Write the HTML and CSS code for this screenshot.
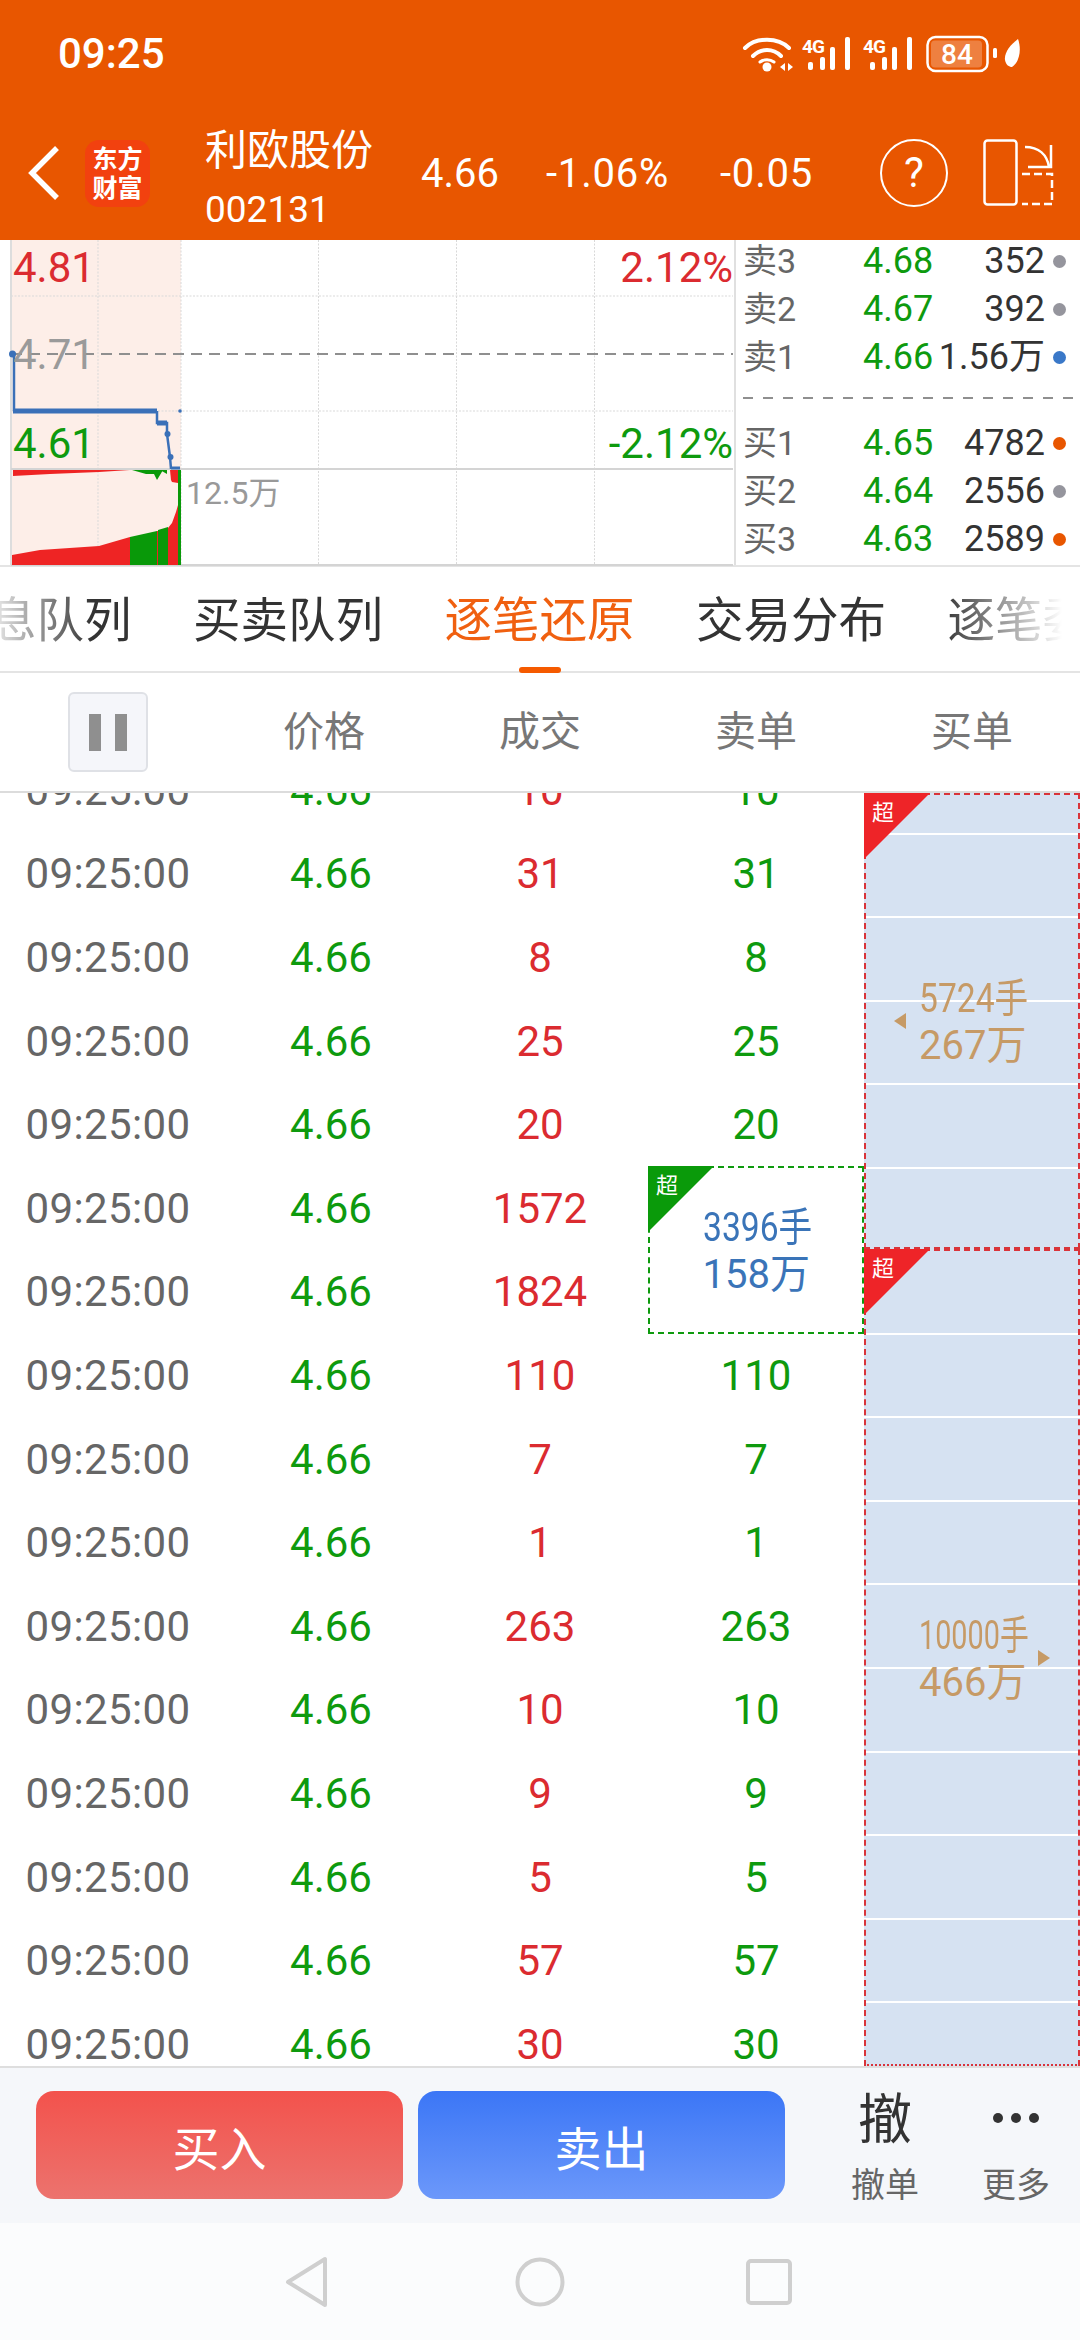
FILE: index.html
```html
<!DOCTYPE html>
<html lang="zh">
<head>
<meta charset="utf-8">
<title>利欧股份</title>
<link rel="stylesheet" href="styles.css">
</head>
<body>
<div class="page">
  <header class="top">
    <div class="status">
      <span class="clock">09:25</span>
      <svg class="status-icons" width="290" height="40" viewBox="0 0 290 40">
        <g fill="none" stroke="#fff" stroke-linecap="round">
          <path d="M3 14 C14 3 36 3 47 14" stroke-width="4"/>
          <path d="M11 22 C19 14 31 14 39 22" stroke-width="4"/>
          <path d="M18 28 C22 25 28 25 32 28" stroke-width="3"/>
        </g>
        <circle cx="25" cy="33" r="4.5" fill="#fff"/>
        <path d="M38 33 l5 -4 v8z M46 29 l5 4 l-5 4z" fill="#fff"/>
        <text class="s4g" x="60" y="19">4G</text>
        <g fill="#fff">
          <rect x="66" y="28" width="5" height="8" rx="2"/><rect x="78" y="23" width="5" height="13" rx="2"/><rect x="88" y="13" width="5" height="23" rx="2"/><rect x="103" y="3" width="5" height="33" rx="2"/>
        </g>
        <text class="s4g" x="121" y="19">4G</text>
        <g fill="#fff">
          <rect x="128" y="28" width="5" height="8" rx="2"/><rect x="140" y="23" width="5" height="13" rx="2"/><rect x="150" y="13" width="5" height="23" rx="2"/><rect x="165" y="3" width="5" height="33" rx="2"/>
        </g>
        <rect x="185.500" y="3" width="60" height="34" rx="8" fill="none" stroke="#fff" stroke-width="2.5"/>
        <rect x="189" y="6.500" width="51" height="27" rx="4" fill="#fff" fill-opacity=".25"/>
        <text class="sbat" x="215" y="30">84</text>
        <rect x="251" y="14" width="4" height="10" rx="1.5" fill="#fff"/>
        <path d="M276 5 C268 11 262 19 263 26 C264 31 267 33 270 33 C277 29 280 16 276 5Z" fill="#fff"/>
      </svg>
    </div>
    <div class="title">
      <svg class="back" width="34" height="56" viewBox="0 0 34 56"><path d="M30 3 L5 28 L30 53" fill="none" stroke="#fff" stroke-width="5.5"/></svg>
      <div class="logo"><span>东方</span><span>财富</span></div>
      <div class="name"><span class="name-cn">利欧股份</span><span class="name-code">002131</span></div>
      <div class="quote">
        <span class="q1">4.66</span>
        <span class="q2">-1.06%</span>
        <span class="q3">-0.05</span>
      </div>
      <div class="help">?</div>
      <svg class="flip" width="72" height="68" viewBox="0 0 72 68">
        <rect x="1.5" y="1.5" width="32" height="64" rx="3" fill="none" stroke="#fff" stroke-width="2.5"/>
        <path d="M42 8 C56 8 64 16 66 28 M68 6 V28 H45" fill="none" stroke="#fff" stroke-width="2.5"/>
        <path d="M39 35 H69 V65 H39" fill="none" stroke="#fff" stroke-width="2.5" stroke-dasharray="8 4"/>
      </svg>
    </div>
  </header>

  <section class="market">
    <div class="chart">
      <svg class="chart-svg" width="735" height="326" viewBox="0 0 735 326">
        <rect x="11" y="0" width="170" height="325" fill="#fdeee8"/>
        <g stroke="#d9d9d9" stroke-width="1" stroke-dasharray="2 1.5" fill="none">
          <path d="M11 56H733M11 171H733"/>
          <path d="M98 0V325M181 0V325M318.500 0V325M456.500 0V325M594.500 0V325"/>
        </g>
        <path d="M11 0V325" stroke="#ddd" stroke-width="2"/>
        <path d="M11 114H733" stroke="#8f8f8f" stroke-width="2" stroke-dasharray="11 7"/>
        <path d="M11 229H733M11 325H733" stroke="#d4d4d4" stroke-width="2"/>
        <g fill="#ee2424">
          <path d="M13 230V236L50 234L99 232L130 230Z"/>
          <path d="M170 230H178V243L172 242L171 240Z"/>
          <path d="M12 325V315L40 310L99 306L130 297V325Z"/>
          <path d="M157 291H158V325H157Z"/>
          <path d="M168 288L172 283L176 272L178 265V325H168Z"/>
        </g>
        <g fill="#099909">
          <path d="M132 230H163L157 240L154 234L146 234Z"/>
          <path d="M160 230H167V234Z"/>
          <path d="M130 297L157 291V325H130Z"/>
          <path d="M158 290L168 287V325H158Z"/>
          <path d="M178 230H181V325H178Z"/>
        </g>
        <g fill="none" stroke="#3a70b8">
          <path d="M14 114V171" stroke-width="2.5"/>
          <path d="M13 171H157" stroke-width="5"/>
          <path d="M157 171V183H167V194L170 217L171 229" stroke-width="2.500"/>
          <path d="M157 183H167" stroke-width="5"/>
          <path d="M171 228H180" stroke-width="3"/>
        </g>
        <g fill="#3a70b8">
          <circle cx="12.500" cy="114" r="3.500"/><circle cx="167.500" cy="194" r="3"/><circle cx="170.500" cy="217" r="3"/><circle cx="180" cy="171" r="1.800"/>
        </g>
      </svg>
      <span class="lb up p-a">4.81</span>
      <span class="lb up p-b">2.12%</span>
      <span class="lb flat p-c">4.71</span>
      <span class="lb down p-d">4.61</span>
      <span class="lb down p-e">-2.12%</span>
      <span class="lb-vol">12.5万</span>
    </div>
    <div class="depth">
      <div class="side asks">
        <div class="lv"><span class="lv-n">卖3</span><span class="lv-p">4.68</span><span class="lv-v">352</span><i class="dot grey"></i></div>
        <div class="lv"><span class="lv-n">卖2</span><span class="lv-p">4.67</span><span class="lv-v">392</span><i class="dot grey"></i></div>
        <div class="lv"><span class="lv-n">卖1</span><span class="lv-p">4.66</span><span class="lv-v">1.56万</span><i class="dot blue"></i></div>
      </div>
      <div class="split"></div>
      <div class="side">
        <div class="lv"><span class="lv-n">买1</span><span class="lv-p">4.65</span><span class="lv-v">4782</span><i class="dot orange"></i></div>
        <div class="lv"><span class="lv-n">买2</span><span class="lv-p">4.64</span><span class="lv-v">2556</span><i class="dot grey"></i></div>
        <div class="lv"><span class="lv-n">买3</span><span class="lv-p">4.63</span><span class="lv-v">2589</span><i class="dot orange"></i></div>
      </div>
    </div>
  </section>

  <nav class="tabs">
    <span class="tab">信息队列</span>
    <span class="tab">买卖队列</span>
    <span class="tab active">逐笔还原</span>
    <span class="tab">交易分布</span>
    <span class="tab">逐笔委托</span>
  </nav>

  <div class="thead">
    <div class="th-cell"><div class="pause"><i></i><i></i></div></div>
    <div class="th-cell">价格</div>
    <div class="th-cell">成交</div>
    <div class="th-cell">卖单</div>
    <div class="th-cell">买单</div>
  </div>

  <div class="list">
    <div class="rows">
      <span class="t">09:25:00</span><span class="g price">4.66</span><span class="r">10</span><span class="g">10</span>
      <span class="t">09:25:00</span><span class="g price">4.66</span><span class="r">31</span><span class="g">31</span>
      <span class="t">09:25:00</span><span class="g price">4.66</span><span class="r">8</span><span class="g">8</span>
      <span class="t">09:25:00</span><span class="g price">4.66</span><span class="r">25</span><span class="g">25</span>
      <span class="t">09:25:00</span><span class="g price">4.66</span><span class="r">20</span><span class="g">20</span>
      <span class="t">09:25:00</span><span class="g price">4.66</span><span class="r">1572</span>
      <div class="sell-block">
        <span class="corner green-corner"></span><span class="corner-t">超</span>
        <div class="sum blue-text"><span class="s-l1 sq4">3396手</span><span class="s-l2">158万</span></div>
      </div>
      <span class="t">09:25:00</span><span class="g price">4.66</span><span class="r">1824</span>
      <span class="t">09:25:00</span><span class="g price">4.66</span><span class="r">110</span><span class="g">110</span>
      <span class="t">09:25:00</span><span class="g price">4.66</span><span class="r">7</span><span class="g">7</span>
      <span class="t">09:25:00</span><span class="g price">4.66</span><span class="r">1</span><span class="g">1</span>
      <span class="t">09:25:00</span><span class="g price">4.66</span><span class="r">263</span><span class="g">263</span>
      <span class="t">09:25:00</span><span class="g price">4.66</span><span class="r">10</span><span class="g">10</span>
      <span class="t">09:25:00</span><span class="g price">4.66</span><span class="r">9</span><span class="g">9</span>
      <span class="t">09:25:00</span><span class="g price">4.66</span><span class="r">5</span><span class="g">5</span>
      <span class="t">09:25:00</span><span class="g price">4.66</span><span class="r">57</span><span class="g">57</span>
      <span class="t">09:25:00</span><span class="g price">4.66</span><span class="r">30</span><span class="g">30</span>
    </div>
    <div class="buys">
      <div class="buy-block first">
        <span class="corner red-corner"></span><span class="corner-t">超</span>
        <div class="buy-in left-side">
          <i class="arrow-l"></i>
          <div class="sum"><span class="s-l1 sq4">5724手</span><span class="s-l2">267万</span></div>
        </div>
      </div>
      <div class="buy-block second">
        <span class="corner red-corner"></span><span class="corner-t">超</span>
        <div class="buy-in right-side">
          <div class="sum"><span class="s-l1 sq5">10000手</span><span class="s-l2">466万</span></div>
          <i class="arrow-r"></i>
        </div>
      </div>
    </div>
  </div>

  <div class="actions">
    <button class="btn buy">买入</button>
    <button class="btn sell">卖出</button>
    <div class="act act-cancel"><span class="act-big">撤</span><span class="act-lb">撤单</span></div>
    <div class="act act-more"><span class="act-dots"><i></i><i></i><i></i></span><span class="act-lb">更多</span></div>
  </div>

  <div class="sysnav">
    <svg width="44" height="52" viewBox="0 0 44 52"><path d="M40 3 V49 L3 26 Z" fill="none" stroke="#cfcfcf" stroke-width="4" stroke-linejoin="round"/></svg>
    <svg width="50" height="50" viewBox="0 0 50 50"><circle cx="25" cy="25" r="22.500" fill="none" stroke="#cfcfcf" stroke-width="4"/></svg>
    <svg width="46" height="46" viewBox="0 0 46 46"><rect x="2" y="2" width="42" height="42" rx="3" fill="none" stroke="#cfcfcf" stroke-width="4"/></svg>
  </div>
</div>
</body>
</html>
```
FILE: styles.css
```css
* { box-sizing: border-box; }
html, body { margin: 0; padding: 0; }
body { font-family: Roboto, "Noto Sans CJK SC", sans-serif; background: #fff; color: #333; }
.page { width: 1080px; height: 2340px; display: flex; flex-direction: column; overflow: hidden; }

/* top */
.top { height: 240px; background: #e85600; color: #fff; flex: none; }
.status { height: 113px; display: flex; align-items: center; justify-content: space-between; padding: 0 0 6px 58px; }
.clock { font-size: 42px; line-height: 48px; font-weight: 500; }
.status-icons { margin: 1px 48px 0 0; }
.s4g { font-size: 19px; font-weight: 700; fill: #fff; letter-spacing: -1px; }
.sbat { font-size: 28px; font-weight: 500; fill: #fff; text-anchor: middle; }
.title { height: 127px; display: flex; align-items: center; padding-left: 27px; }
.back { flex: none; margin-top: -8px; }
.logo { width: 65px; height: 67px; margin: -6px 0 0 24px; background: #f2410f; border-radius: 14px; display: flex; flex-direction: column; align-items: center; justify-content: center; font-size: 25px; line-height: 29px; font-weight: 700; color: #fff; flex: none; }
.name { display: flex; flex-direction: column; margin: 6px 0 0 55px; width: 216px; flex: none; }
.name-cn { font-size: 42px; line-height: 50px; margin-top: -2px; }
.name-code { font-size: 37px; line-height: 44px; margin-top: 12px; }
.quote { display: flex; font-size: 40px; line-height: 44px; margin-top: -6px; flex: none; width: 459px; }
.q1 { width: 125px; }
.q2 { width: 174px; letter-spacing: .8px; }
.q3 { letter-spacing: .8px; }
.help { width: 68px; height: 68px; border: 2.500px solid #fff; border-radius: 50%; display: flex; align-items: center; justify-content: center; font-size: 42px; margin: -8px 0 0 0; flex: none; }
.flip { margin: -8px 0 0 35px; flex: none; }

/* market */
.market { height: 327px; display: flex; border-bottom: 2px solid #e4e4e4; flex: none; }
.chart { position: relative; width: 735px; flex: none; }
.chart-svg { display: block; }
.lb { position: absolute; font-size: 42px; line-height: 46px; }
.up { color: #db2b30; }
.down { color: #0e9a0e; }
.flat { color: #9a9a9a; }
.p-a { left: 13px; top: 5px; }
.p-b { right: 2px; top: 5px; }
.p-c { left: 13px; top: 92px; }
.p-d { left: 13px; top: 181px; }
.p-e { right: 2px; top: 181px; }
.lb-vol { position: absolute; left: 186px; top: 233px; font-size: 32px; line-height: 40px; color: #999; }
.depth { flex: 1; border-left: 2px solid #e0e0e0; margin-left: -1px; padding-left: 7px; margin-top: 0; }
.side { display: flex; flex-direction: column; }
.asks { margin-top: -3px; }
.lv { display: grid; grid-template-columns: 120px 69px 113px 28px; align-items: center; height: 48px; line-height: 44px; }
.lv-n { font-size: 34px; color: #666; }
.lv-p { font-size: 36px; color: #0e9a0e; }
.lv-v { font-size: 36px; color: #333; text-align: right; white-space: nowrap; }
.dot { width: 13px; height: 13px; border-radius: 50%; justify-self: start; margin-left: 8px; }
.grey { background: #95959d; }
.blue { background: #3a78c8; }
.orange { background: #e85600; }
.split { height: 2px; margin: 16px 7px 20px 0; background-image: repeating-linear-gradient(to right, #8f8f8f 0 10px, transparent 10px 20px); }

/* tabs */
.tabs { height: 106px; display: flex; gap: 61.500px; margin-left: -58.500px; width: 1139px; position: relative; flex: none; padding-top: 26px; white-space: nowrap; font-size: 47.500px; line-height: 56px; color: #333; -webkit-mask-image: linear-gradient(to right, transparent 40px, #000 150px, #000 1000px, transparent 1120px); mask-image: linear-gradient(to right, transparent 40px, #000 150px, #000 1000px, transparent 1120px); }
.tab { position: relative; flex: none; height: 80px; width: 190px; }
.tab.active { color: #f06010; }
.tab.active::after { content: ""; position: absolute; left: 74px; bottom: 0; width: 42px; height: 6px; background: #f55a00; border-radius: 3px; }

/* header of table */
.thead { height: 122px; display: grid; grid-template-columns: repeat(5, 216px); align-items: center; border-top: 2px solid #e4e4e4; border-bottom: 2px solid #dcdcdc; flex: none; margin-top: -2px; font-size: 41px; line-height: 52px; color: #777; text-align: center; }
.th-cell { display: flex; justify-content: center; }
.pause { width: 80px; height: 80px; border: 2px solid #dfe1e6; border-radius: 6px; background: #f5f6fa; display: flex; justify-content: center; align-items: center; gap: 14px; }
.pause i { width: 12px; height: 37px; background: #8f8f8f; }

/* list */
.list { height: 1273px; display: flex; overflow: hidden; flex: none; }
.rows { width: 864px; flex: none; margin-top: -44px; display: grid; grid-template-columns: repeat(4, 216px); grid-auto-rows: 83.600px; align-items: center; justify-items: center; font-size: 42px; line-height: 48px; }
.t { color: #666; letter-spacing: .4px; }
.g { color: #0e9a0e; }
.price { margin-left: 14px; }
.r { color: #db2b30; }
.sell-block { position: relative; align-self: stretch; justify-self: stretch; grid-row: span 2; border: 2px dashed #0e9a0e; display: flex; align-items: center; justify-content: center; margin-top: -1px; }
.corner { position: absolute; left: -2px; top: -2px; width: 66px; height: 66px; clip-path: polygon(0 0, 100% 0, 0 100%); }
.green-corner { background: #0a9a0a; }
.red-corner { background: #ee2428; }
.corner-t { position: absolute; left: 6px; top: 4px; font-size: 22px; line-height: 28px; color: #fff; }
.sum { display: flex; flex-direction: column; align-items: flex-start; width: 107px; color: #c69a66; }
.blue-text { color: #3a74b8; }
.s-l1 { font-size: 40px; line-height: 50px; margin: 3px 0 -3px; white-space: nowrap; transform-origin: left center; }
.sq4 { transform: scaleX(.84); }
.sq5 { transform: scaleX(.72); }
.s-l2 { font-size: 40px; line-height: 50px; white-space: nowrap; }
.buys { width: 216px; flex: none; display: flex; flex-direction: column; }
.buy-block { position: relative; border: 2px dashed #d9343a; background-color: #d6e2f2; background-image: repeating-linear-gradient(to bottom, transparent 0 81.600px, #fff 81.600px 83.600px); display: flex; align-items: center; flex: none; }
.first { height: 456px; background-position: 0 -44px; }
.second { height: 817px; background-position: 0 0; border-bottom-style: dotted; }
.buy-in { display: flex; align-items: center; }
.left-side { margin-left: 28px; gap: 13px; }
.right-side { margin-left: 53px; gap: 12px; }
.arrow-l { width: 0; height: 0; border-style: solid; border-width: 8px 12px 8px 0; border-color: transparent #c69a66 transparent transparent; }
.arrow-r { width: 0; height: 0; border-style: solid; border-width: 8px 0 8px 12px; border-color: transparent transparent transparent #c69a66; }

/* bottom */
.actions { height: 157px; background: #f5f7fa; border-top: 2px solid #dedede; display: flex; padding: 23px 0 0 36px; flex: none; }
.btn { width: 367px; height: 108px; border: 0; border-radius: 18px; color: #fff; font: 47px "Noto Sans CJK SC", sans-serif; margin-right: 15px; padding: 0; flex: none; }
.buy { background: linear-gradient(#f3524c, #ec736e); }
.sell { background: linear-gradient(#3b76f6, #6c98fa); }
.act { display: flex; flex-direction: column; align-items: center; flex: none; }
.act-cancel { width: 70px; margin-left: 50px; }
.act-more { width: 70px; margin-left: 61px; }
.act-big { height: 74px; font-size: 54px; line-height: 60px; color: #333; }
.act-lb { font-size: 34px; line-height: 40px; color: #666; white-space: nowrap; margin-top: 0; }
.act-dots { height: 74px; display: flex; gap: 8px; padding-top: 22px; }
.act-dots i { width: 10px; height: 10px; border-radius: 50%; background: #333; }
.sysnav { flex: 1; background: #fbfcfd; display: flex; align-items: center; padding-left: 285px; }
.sysnav svg:nth-child(2) { margin-left: 186px; }
.sysnav svg:nth-child(3) { margin-left: 181px; }
```
